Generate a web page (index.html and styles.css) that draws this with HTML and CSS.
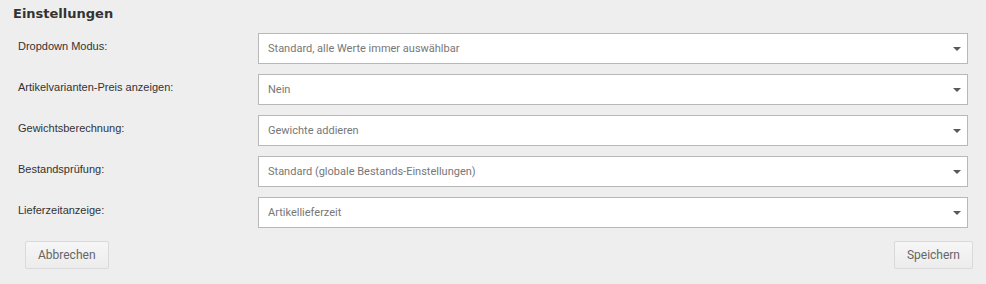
FILE: index.html
```html
<!DOCTYPE html>
<html lang="de">
  <head>
    <meta charset="UTF-8" />
    <title>Einstellungen</title>
    <link rel="stylesheet" href="styles.css">
  </head>

  <body>
    <div class="panel">
      <h3 class="panel-title">Einstellungen</h3>

      <form class="settings">
        <!-- Dropdown mode -->
        <div class="row">
          <label class="row-label" for="dropdownMode">Dropdown Modus:</label>
          <div class="select-wrap">
            <select id="dropdownMode" class="select">
              <option>Standard, alle Werte immer auswählbar</option>
            </select>
          </div>
        </div>

        <div class="row">
          <label class="row-label" for="variantPrice">Artikelvarianten-Preis anzeigen:</label>
          <div class="select-wrap">
            <select id="variantPrice" class="select">
              <option>Nein</option>
            </select>
          </div>
        </div>

        <div class="row">
          <label class="row-label" for="weight">Gewichtsberechnung:</label>
          <div class="select-wrap">
            <select id="weight" class="select">
              <option>Gewichte addieren</option>
            </select>
          </div>
        </div>

        <div class="row">
          <label class="row-label" for="stock">Bestandsprüfung:</label>
          <div class="select-wrap">
            <select id="stock" class="select">
              <option>Standard (globale Bestands-Einstellungen)</option>
            </select>
          </div>
        </div>

        <div class="row">
          <label class="row-label" for="delivery">Lieferzeitanzeige:</label>
          <div class="select-wrap">
            <select id="delivery" class="select">
              <option>Artikellieferzeit</option>
            </select>
          </div>
        </div>

        <!-- Actions -->
        <div class="actions">
          <button type="button" class="button">Abbrechen</button>
          <button type="button" class="button">Speichern</button>
        </div>
      </form>
    </div>
  </body>
</html>
```

FILE: styles.css
```css
body {
  margin: 0;
  background-color: #eeeeee;
  font-family: "Liberation Sans", Arial, sans-serif;
  color: #333;
}

.panel {
  padding: 6px 13px 0 13px;
}

.panel-title {
  margin: 0;
  font-family: "DejaVu Sans", Verdana, sans-serif;
  font-size: 13px;
  font-weight: bold;
  line-height: 15px;
  color: #333;
}

.settings {
  margin-top: 12px;
  padding-left: 5px;
  padding-right: 5px;
}

.row {
  display: flex;
  align-items: flex-start;
  margin-bottom: 10px;
}

.row-label {
  width: 240px;
  flex-shrink: 0;
  padding-top: 7px;
  font-size: 11px;
  line-height: 13px;
  color: #333;
}

.select-wrap {
  position: relative;
  flex: 1;
}

.select-wrap::after {
  content: "";
  position: absolute;
  right: 7px;
  top: 14px;
  border-left: 4px solid transparent;
  border-right: 4px solid transparent;
  border-top: 4px solid #595959;
  pointer-events: none;
}

.select {
  appearance: none;
  -webkit-appearance: none;
  display: block;
  width: 100%;
  height: 31px;
  margin: 0;
  padding: 0 24px 0 9px;
  border: 1px solid #b8b8b8;
  border-radius: 0;
  background-color: #fff;
  font-family: Roboto, "Liberation Sans", sans-serif;
  font-size: 11px;
  color: #777;
  outline: none;
}

.actions {
  display: flex;
  justify-content: space-between;
  margin-top: 13px;
  margin-left: 7px;
  margin-right: -5px;
}

.button {
  height: 28px;
  padding: 0 12px;
  border: 1px solid #d9d9d9;
  border-radius: 2px;
  background: linear-gradient(#f6f6f6, #ececec);
  font-family: Roboto, "Liberation Sans", sans-serif;
  font-size: 12px;
  color: #666;
  cursor: pointer;
}
```
